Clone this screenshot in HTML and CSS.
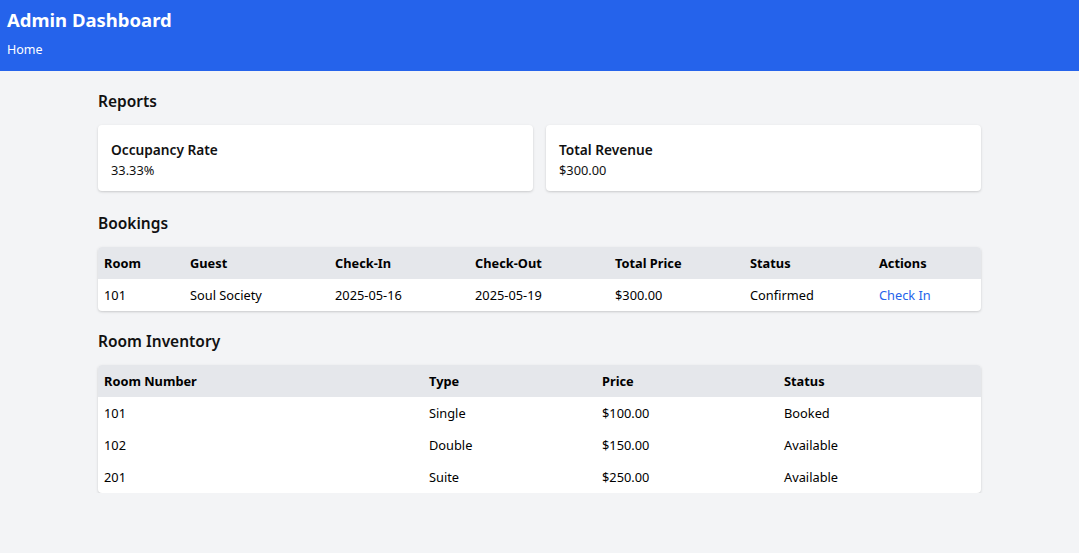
FILE: index.html
```html
<!DOCTYPE html>
<html lang="en">
<head>
<meta charset="utf-8">
<title>Admin Dashboard</title>
<link rel="stylesheet" href="styles.css">
</head>
<body>
<header class="topbar">
  <h1 class="topbar-title">Admin Dashboard</h1>
  <nav class="topbar-nav"><a href="#" class="nav-link">Home</a></nav>
</header>
<main class="content">
  <section class="section section-reports">
    <h2 class="section-title">Reports</h2>
    <div class="report-grid">
      <div class="card">
        <h3 class="card-title">Occupancy Rate</h3>
        <p class="card-value">33.33%</p>
      </div>
      <div class="card">
        <h3 class="card-title">Total Revenue</h3>
        <p class="card-value">$300.00</p>
      </div>
    </div>
  </section>
  <section class="section section-bookings">
    <h2 class="section-title">Bookings</h2>
    <div class="table-wrap">
      <table class="data-table">
        <colgroup>
          <col class="c-b1"><col class="c-b2"><col class="c-b3"><col class="c-b4"><col class="c-b5"><col class="c-b6"><col class="c-b7">
        </colgroup>
        <thead>
          <tr><th>Room</th><th>Guest</th><th>Check-In</th><th>Check-Out</th><th>Total Price</th><th>Status</th><th>Actions</th></tr>
        </thead>
        <tbody>
          <tr><td>101</td><td>Soul Society</td><td>2025-05-16</td><td>2025-05-19</td><td>$300.00</td><td>Confirmed</td><td><a href="#" class="action-link">Check In</a></td></tr>
        </tbody>
      </table>
    </div>
  </section>
  <section class="section section-inventory">
    <h2 class="section-title">Room Inventory</h2>
    <div class="table-wrap">
      <table class="data-table">
        <colgroup>
          <col class="c-r1"><col class="c-r2"><col class="c-r3"><col class="c-r4">
        </colgroup>
        <thead>
          <tr><th>Room Number</th><th>Type</th><th>Price</th><th>Status</th></tr>
        </thead>
        <tbody>
          <tr><td>101</td><td>Single</td><td>$100.00</td><td>Booked</td></tr>
          <tr><td>102</td><td>Double</td><td>$150.00</td><td>Available</td></tr>
          <tr><td>201</td><td>Suite</td><td>$250.00</td><td>Available</td></tr>
        </tbody>
      </table>
    </div>
  </section>
</main>
</body>
</html>
```
FILE: styles.css
```css
* { box-sizing: border-box; }
html, body { margin: 0; padding: 0; }
body {
  background: #f3f4f6;
  font-family: "Noto Sans", "Open Sans", sans-serif;
  color: #111827;
  font-size: 13px;
}
.topbar {
  background: #2563eb;
  color: #fff;
  padding: 6px 7px 12px;
  height: 71px;
}
.topbar-title {
  margin: 0;
  font-size: 18.5px;
  line-height: 28px;
  font-weight: 700;
}
.topbar-nav { margin-top: 5px; line-height: 20px; }
.nav-link { color: #fff; text-decoration: none; font-size: 12.5px; }

.content {
  width: 883px;
  margin: 0 auto;
  padding-top: 18px;
}
.section-title {
  margin: 0 0 12px;
  font-size: 15.5px;
  line-height: 24px;
  font-weight: 600;
  color: #111;
}
.section-reports { margin-bottom: 20px; }
.section-bookings { margin-bottom: 18px; }

.report-grid {
  display: grid;
  grid-template-columns: 1fr 1fr;
  gap: 13px;
}
.card {
  background: #fff;
  border-radius: 4px;
  box-shadow: 0 1px 3px rgba(0,0,0,0.12), 0 1px 2px rgba(0,0,0,0.06);
  padding: 15px 13px 11px;
  height: 66px;
}
.card-title {
  margin: 0;
  font-size: 13.7px;
  line-height: 20px;
  font-weight: 600;
  color: #111;
}
.card-value {
  margin: 0;
  font-size: 12.8px;
  line-height: 20px;
  color: #111;
}

.table-wrap {
  background: #fff;
  border-radius: 4px;
  box-shadow: 0 1px 3px rgba(0,0,0,0.12), 0 1px 2px rgba(0,0,0,0.06);
  overflow: hidden;
}
.data-table {
  width: 100%;
  border-collapse: collapse;
  table-layout: fixed;
  font-size: 12.8px;
}
.data-table th, .data-table td {
  text-align: left;
  padding: 0 6px;
  height: 32px;
  line-height: 20px;
  color: #000;
}
.data-table th { background: #e5e7eb; font-weight: 700; }
.action-link { color: #2563eb; text-decoration: none; }

.c-b1 { width: 86px; }
.c-b2 { width: 145px; }
.c-b3 { width: 140px; }
.c-b4 { width: 140px; }
.c-b5 { width: 135px; }
.c-b6 { width: 129px; }
.c-b7 { width: 108px; }
.c-r1 { width: 325px; }
.c-r2 { width: 173px; }
.c-r3 { width: 182px; }
.c-r4 { width: 203px; }
```
